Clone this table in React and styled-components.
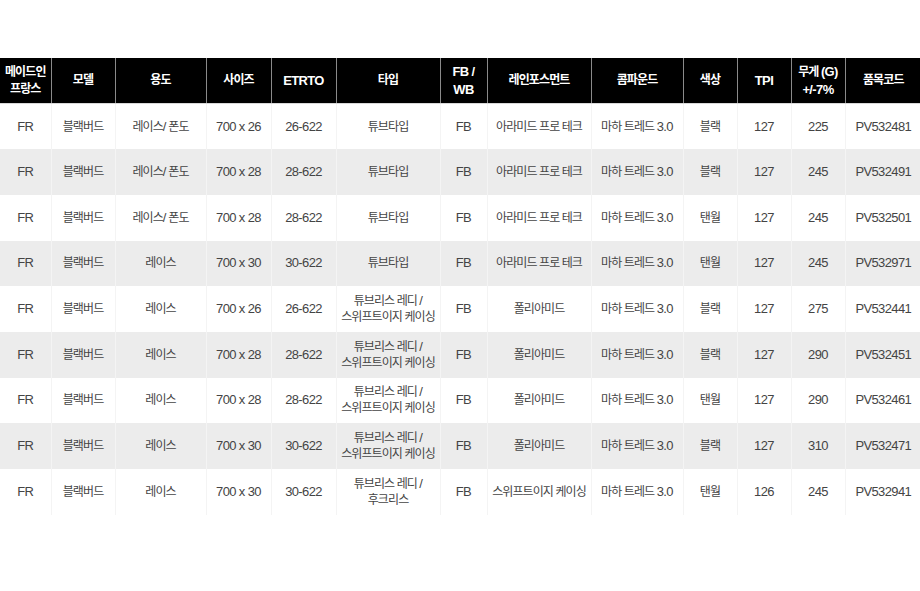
import React from "react"
import styled, { createGlobalStyle } from "styled-components"

const GlobalStyle = createGlobalStyle`
  html, body {
    margin: 0;
    padding: 0;
    background: #fff;
  }
  body {
    font-family: "Liberation Sans", "Noto Sans CJK KR", sans-serif;
  }
`

const columns = [
  { label: ["메이드인", "프랑스"], width: 51 },
  { label: ["모델"], width: 64 },
  { label: ["용도"], width: 91 },
  { label: ["사이즈"], width: 65 },
  { label: ["ETRTO"], width: 65 },
  { label: ["타입"], width: 104 },
  { label: ["FB /", "WB"], width: 47 },
  { label: ["레인포스먼트"], width: 104 },
  { label: ["콤파운드"], width: 92 },
  { label: ["색상"], width: 54 },
  { label: ["TPI"], width: 54 },
  { label: ["무게 (G)", "+/-7%"], width: 54 },
  { label: ["품목코드"], width: 76 },
]

const rows = [
  ["FR", "블랙버드", "레이스/ 폰도", "700 x 26", "26-622", "튜브타입", "FB", "아라미드 프로 테크", "마하 트레드 3.0", "블랙", "127", "225", "PV532481"],
  ["FR", "블랙버드", "레이스/ 폰도", "700 x 28", "28-622", "튜브타입", "FB", "아라미드 프로 테크", "마하 트레드 3.0", "블랙", "127", "245", "PV532491"],
  ["FR", "블랙버드", "레이스/ 폰도", "700 x 28", "28-622", "튜브타입", "FB", "아라미드 프로 테크", "마하 트레드 3.0", "탠월", "127", "245", "PV532501"],
  ["FR", "블랙버드", "레이스", "700 x 30", "30-622", "튜브타입", "FB", "아라미드 프로 테크", "마하 트레드 3.0", "탠월", "127", "245", "PV532971"],
  ["FR", "블랙버드", "레이스", "700 x 26", "26-622", "튜브리스 레디 /|스위프트이지 케이싱", "FB", "폴리아미드", "마하 트레드 3.0", "블랙", "127", "275", "PV532441"],
  ["FR", "블랙버드", "레이스", "700 x 28", "28-622", "튜브리스 레디 /|스위프트이지 케이싱", "FB", "폴리아미드", "마하 트레드 3.0", "블랙", "127", "290", "PV532451"],
  ["FR", "블랙버드", "레이스", "700 x 28", "28-622", "튜브리스 레디 /|스위프트이지 케이싱", "FB", "폴리아미드", "마하 트레드 3.0", "탠월", "127", "290", "PV532461"],
  ["FR", "블랙버드", "레이스", "700 x 30", "30-622", "튜브리스 레디 /|스위프트이지 케이싱", "FB", "폴리아미드", "마하 트레드 3.0", "블랙", "127", "310", "PV532471"],
  ["FR", "블랙버드", "레이스", "700 x 30", "30-622", "튜브리스 레디 /|후크리스", "FB", "스위프트이지 케이싱", "마하 트레드 3.0", "탠월", "126", "245", "PV532941"],
]

// latin runs (numbers, codes, slashes) get a slightly larger size so they keep the wider look
const LATIN_RUN = /([A-Za-z0-9()+%.\-\/]+(?: [A-Za-z0-9()+%.\-\/]+)*)/

const Line = ({ text }) =>
  text.split(LATIN_RUN).map((part, i) =>
    i % 2 === 1 ? <Latin key={i}>{part}</Latin> : part
  )

const Lines = ({ text }) => {
  const parts = Array.isArray(text) ? text : text.split("|")
  return parts.map((part, i) => (
    <React.Fragment key={i}>
      {i > 0 && <br />}
      <Line text={part} />
    </React.Fragment>
  ))
}

export default function App() {
  return (
    <Page>
      <GlobalStyle />
      <SpecTable>
        <colgroup>
          {columns.map((col, i) => (
            <col key={i} style={{ width: col.width }} />
          ))}
        </colgroup>
        <thead>
          <tr>
            {columns.map((col, i) => (
              <HeadCell key={i}>
                <Lines text={col.label} />
              </HeadCell>
            ))}
          </tr>
        </thead>
        <tbody>
          {rows.map((row, r) => (
            <BodyRow key={r} $shaded={r % 2 === 1}>
              {row.map((cell, c) => (
                <BodyCell key={c}>
                  <Lines text={cell} />
                </BodyCell>
              ))}
            </BodyRow>
          ))}
        </tbody>
      </SpecTable>
    </Page>
  )
}

const Page = styled.div`
  width: 920px;
  height: 591px;
  padding-top: 58px;
  box-sizing: border-box;
  background: #fff;
`

const SpecTable = styled.table`
  width: 919px;
  table-layout: fixed;
  border-collapse: collapse;
  border-spacing: 0;
`

const Latin = styled.span`
  font-size: 1.08em;
  letter-spacing: -0.6px;
`

const HeadCell = styled.th`
  height: 45px;
  padding: 0;
  background: #000;
  color: #fff;
  font-size: 12px;
  font-weight: 700;
  line-height: 17px;
  letter-spacing: -0.9px;
  text-align: center;
  vertical-align: middle;
  border-left: 1px solid #8a8a8a;
  border-bottom: 1px solid #d8d8d8;

  &:first-child {
    border-left: none;
  }
`

const BodyRow = styled.tr`
  height: 45.7px;
  background: ${(p) => (p.$shaded ? "#ececec" : "#fff")};
`

const BodyCell = styled.td`
  padding: 0;
  color: #444;
  font-size: 12px;
  line-height: 16px;
  letter-spacing: -0.9px;
  text-align: center;
  vertical-align: middle;
  border-left: 1px solid #f4f4f4;

  &:first-child {
    border-left: none;
  }
`
